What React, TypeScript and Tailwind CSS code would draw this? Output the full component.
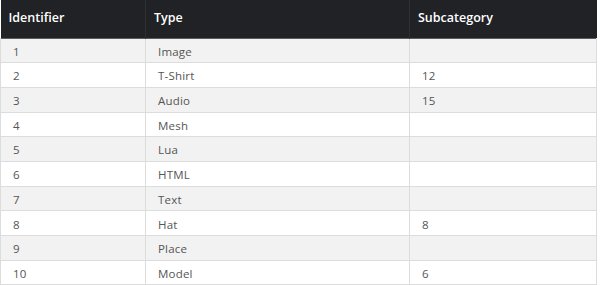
import React from 'react';

const rows: [string, string, string][] = [
  ['1', 'Image', ''],
  ['2', 'T-Shirt', '12'],
  ['3', 'Audio', '15'],
  ['4', 'Mesh', ''],
  ['5', 'Lua', ''],
  ['6', 'HTML', ''],
  ['7', 'Text', ''],
  ['8', 'Hat', '8'],
  ['9', 'Place', ''],
  ['10', 'Model', '6'],
];

const App: React.FC = () => {
  return (
    <div className="w-[600px] h-[285px] bg-white overflow-hidden font-['Open_Sans',sans-serif]">
      <table className="w-[597px] border-collapse table-fixed">
        <thead>
          <tr className="h-[38px] bg-[#202226] text-white text-[12.5px] text-left border-b border-[#5b5d61]">
            <th className="w-[145px] pl-[8px] font-semibold border-r border-[#2e3034]">Identifier</th>
            <th className="w-[264px] pl-[8px] font-semibold border-r border-[#2e3034]">Type</th>
            <th className="pl-[8px] font-semibold">Subcategory</th>
          </tr>
        </thead>
        <tbody>
          {rows.map(([id, type, sub], i) => (
            <tr
              key={id}
              className={`h-[24.7px] text-[11.5px] text-[#555555] tracking-[0.2px] border-b border-[#dcdcdc] ${i % 2 === 0 ? 'bg-[#f2f2f2]' : 'bg-white'}`}
            >
              <td className="pl-[12px] pt-[2px] border-l border-r border-[#dcdcdc]">{id}</td>
              <td className="pl-[12px] pt-[2px] border-r border-[#dcdcdc]">{type}</td>
              <td className="pl-[12px] pt-[2px] border-r border-[#dcdcdc]">{sub}</td>
            </tr>
          ))}
        </tbody>
      </table>
    </div>
  );
};

export default App;
